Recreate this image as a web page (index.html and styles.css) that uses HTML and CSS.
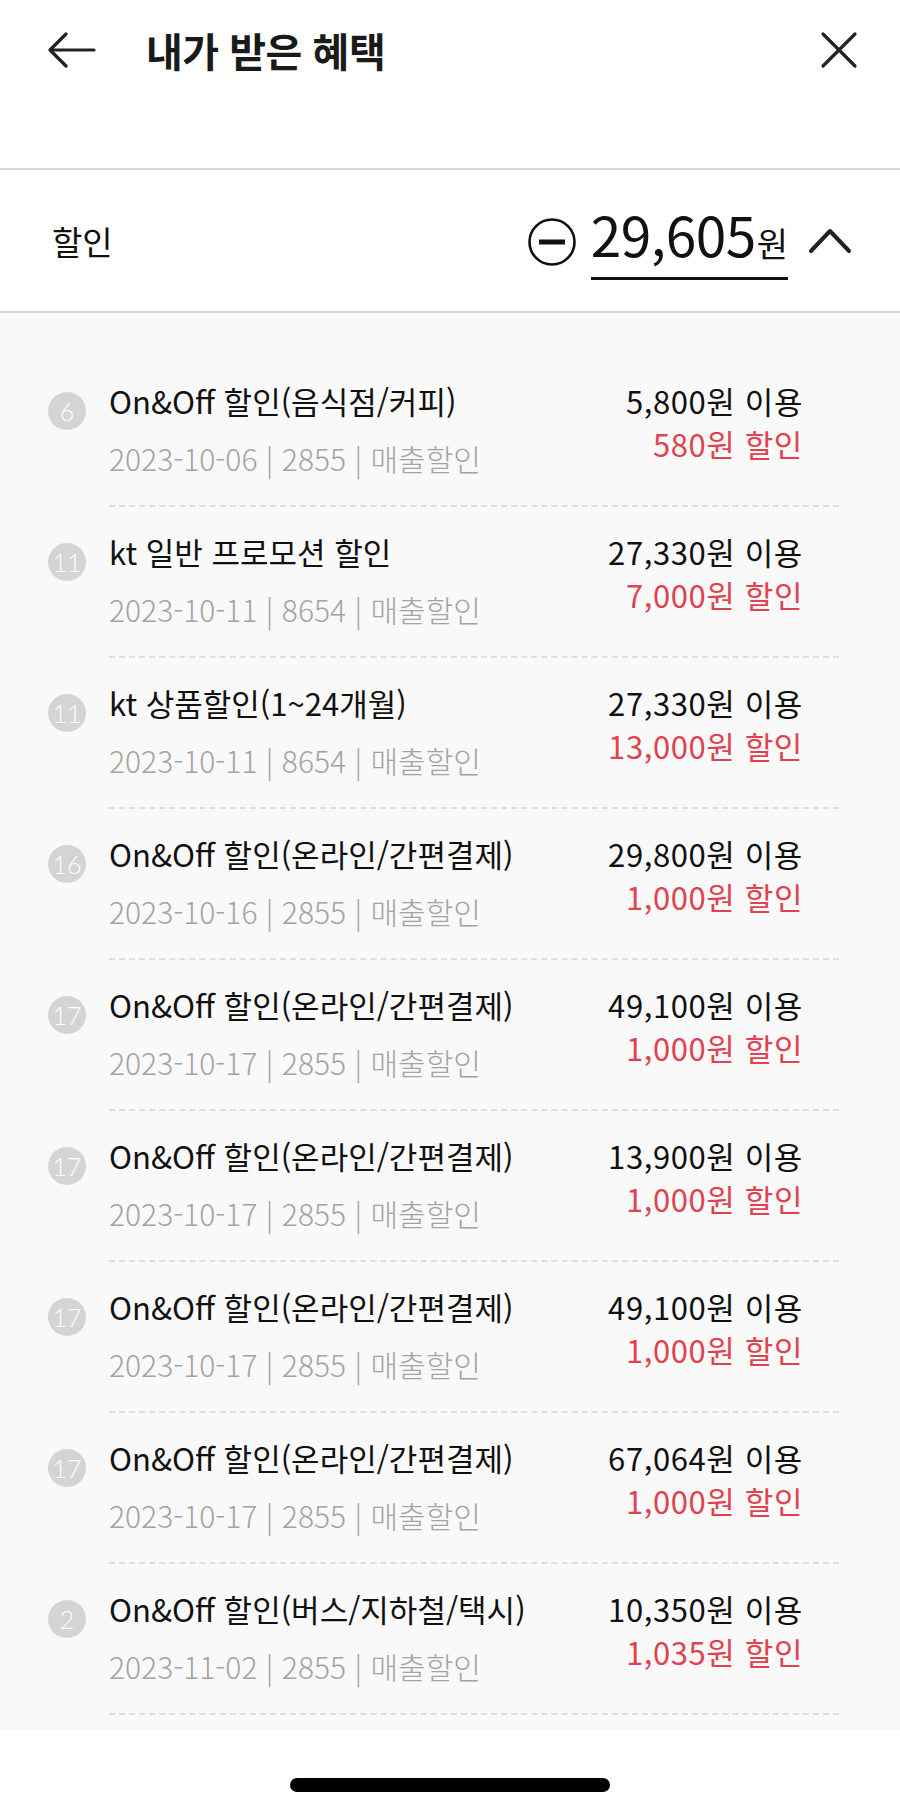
FILE: index.html
```html
<!DOCTYPE html>
<html lang="ko">
<head>
<meta charset="utf-8">
<title>내가 받은 혜택</title>
<link rel="stylesheet" href="styles.css">
</head>
<body>
<div class="page">
  <header class="topbar">
    <div class="topbar-row">
      <svg class="icon-back" viewBox="0 0 48 36" width="48" height="36" aria-hidden="true">
        <path d="M2 18 H46 M18 2 L2 18 L18 34" fill="none" stroke="#222" stroke-width="3.2" stroke-linecap="round" stroke-linejoin="round"/>
      </svg>
      <h1 class="title">내가 받은 혜택</h1>
      <svg class="icon-close" viewBox="0 0 38 38" width="38" height="38" aria-hidden="true">
        <path d="M3 3 L35 35 M35 3 L3 35" fill="none" stroke="#222" stroke-width="3.2" stroke-linecap="round"/>
      </svg>
    </div>
  </header>

  <section class="summary">
    <div class="summary-label">할인</div>
    <div class="summary-right">
      <svg class="icon-minus" viewBox="0 0 50 50" width="50" height="50" aria-hidden="true">
        <circle cx="25" cy="25" r="22.5" fill="none" stroke="#111" stroke-width="2.6"/>
        <rect x="12" y="22.5" width="26" height="5" fill="#111"/>
      </svg>
      <div class="amount"><span class="amount-num">29,605</span><span class="amount-unit">원</span></div>
      <svg class="icon-chevron" viewBox="0 0 44 28" width="44" height="28" aria-hidden="true">
        <path d="M3 25 L22 5 L41 25" fill="none" stroke="#222" stroke-width="4" stroke-linecap="round" stroke-linejoin="round"/>
      </svg>
    </div>
  </section>

  <main class="list">
    <div class="item">
      <div class="badge">6</div>
      <div class="item-body">
        <div class="item-left">
          <div class="item-title">On&amp;Off 할인(음식점/커피)</div>
          <div class="item-sub">2023-10-06 | 2855 | 매출할인</div>
        </div>
        <div class="item-right">
          <div class="item-use">5,800원 이용</div>
          <div class="item-disc">580원 할인</div>
        </div>
      </div>
    </div>
    <div class="item">
      <div class="badge">11</div>
      <div class="item-body">
        <div class="item-left">
          <div class="item-title">kt 일반 프로모션 할인</div>
          <div class="item-sub">2023-10-11 | 8654 | 매출할인</div>
        </div>
        <div class="item-right">
          <div class="item-use">27,330원 이용</div>
          <div class="item-disc">7,000원 할인</div>
        </div>
      </div>
    </div>
    <div class="item">
      <div class="badge">11</div>
      <div class="item-body">
        <div class="item-left">
          <div class="item-title">kt 상품할인(1~24개월)</div>
          <div class="item-sub">2023-10-11 | 8654 | 매출할인</div>
        </div>
        <div class="item-right">
          <div class="item-use">27,330원 이용</div>
          <div class="item-disc">13,000원 할인</div>
        </div>
      </div>
    </div>
    <div class="item">
      <div class="badge">16</div>
      <div class="item-body">
        <div class="item-left">
          <div class="item-title">On&amp;Off 할인(온라인/간편결제)</div>
          <div class="item-sub">2023-10-16 | 2855 | 매출할인</div>
        </div>
        <div class="item-right">
          <div class="item-use">29,800원 이용</div>
          <div class="item-disc">1,000원 할인</div>
        </div>
      </div>
    </div>
    <div class="item">
      <div class="badge">17</div>
      <div class="item-body">
        <div class="item-left">
          <div class="item-title">On&amp;Off 할인(온라인/간편결제)</div>
          <div class="item-sub">2023-10-17 | 2855 | 매출할인</div>
        </div>
        <div class="item-right">
          <div class="item-use">49,100원 이용</div>
          <div class="item-disc">1,000원 할인</div>
        </div>
      </div>
    </div>
    <div class="item">
      <div class="badge">17</div>
      <div class="item-body">
        <div class="item-left">
          <div class="item-title">On&amp;Off 할인(온라인/간편결제)</div>
          <div class="item-sub">2023-10-17 | 2855 | 매출할인</div>
        </div>
        <div class="item-right">
          <div class="item-use">13,900원 이용</div>
          <div class="item-disc">1,000원 할인</div>
        </div>
      </div>
    </div>
    <div class="item">
      <div class="badge">17</div>
      <div class="item-body">
        <div class="item-left">
          <div class="item-title">On&amp;Off 할인(온라인/간편결제)</div>
          <div class="item-sub">2023-10-17 | 2855 | 매출할인</div>
        </div>
        <div class="item-right">
          <div class="item-use">49,100원 이용</div>
          <div class="item-disc">1,000원 할인</div>
        </div>
      </div>
    </div>
    <div class="item">
      <div class="badge">17</div>
      <div class="item-body">
        <div class="item-left">
          <div class="item-title">On&amp;Off 할인(온라인/간편결제)</div>
          <div class="item-sub">2023-10-17 | 2855 | 매출할인</div>
        </div>
        <div class="item-right">
          <div class="item-use">67,064원 이용</div>
          <div class="item-disc">1,000원 할인</div>
        </div>
      </div>
    </div>
    <div class="item">
      <div class="badge">2</div>
      <div class="item-body">
        <div class="item-left">
          <div class="item-title">On&amp;Off 할인(버스/지하철/택시)</div>
          <div class="item-sub">2023-11-02 | 2855 | 매출할인</div>
        </div>
        <div class="item-right">
          <div class="item-use">10,350원 이용</div>
          <div class="item-disc">1,035원 할인</div>
        </div>
      </div>
    </div>
  </main>

  <footer class="home-area">
    <div class="home-indicator"></div>
  </footer>
</div>
</body>
</html>
```

FILE: styles.css
```css
* {
  box-sizing: border-box;
}

html, body {
  margin: 0;
  padding: 0;
  background: #ffffff;
}

body {
  font-family: "Noto Sans CJK KR", "Noto Sans", sans-serif;
  color: #111111;
}

.page {
  width: 900px;
  height: 1796px;
  display: flex;
  flex-direction: column;
  overflow: hidden;
}

/* Top bar */
.topbar {
  height: 170px;
  border-bottom: 2px solid #d6d6d6;
}

.topbar-row {
  height: 100px;
  display: flex;
  align-items: center;
  padding: 0 42px 0 48px;
}

.icon-back {
  flex: none;
  display: block;
}

.title {
  margin: 0 0 0 50px;
  font-size: 40px;
  font-weight: 700;
  line-height: 48px;
  letter-spacing: -0.5px;
  color: #1a1a1a;
  flex: 1;
}

.icon-close {
  flex: none;
  display: block;
}

/* Summary row */
.summary {
  height: 143px;
  border-bottom: 2px solid #d6d6d6;
  display: flex;
  align-items: center;
  justify-content: space-between;
  padding: 0 48px 0 52px;
}

.summary-label {
  font-size: 33px;
  line-height: 40px;
  color: #111;
}

.summary-right {
  display: flex;
  align-items: center;
}

.icon-minus {
  display: block;
  flex: none;
  margin-right: 14px;
  margin-top: 2px;
}

.amount {
  display: flex;
  align-items: baseline;
  border-bottom: 3px solid #111;
  padding-bottom: 7px;
  margin-top: 4px;
  line-height: 55px;
}

.amount-num {
  font-size: 55px;
  font-weight: 400;
  letter-spacing: -0.5px;
}

.amount-unit {
  font-size: 34px;
  margin-left: 1px;
}

.icon-chevron {
  display: block;
  flex: none;
  margin-left: 20px;
  margin-top: -2px;
}

/* List */
.list {
  background: #f9f9f9;
  padding: 43px 61px 0 48px;
  height: 1417px;
}

.item {
  display: flex;
  align-items: flex-start;
}

.badge {
  flex: none;
  width: 38px;
  height: 38px;
  border-radius: 50%;
  background: #d4d4d4;
  color: #ffffff;
  font-family: "Lato", "Noto Sans", sans-serif;
  font-weight: 300;
  font-size: 25px;
  line-height: 38px;
  text-align: center;
  margin-top: 36px;
  margin-right: 23px;
}

.item-body {
  flex: 1;
  display: flex;
  justify-content: space-between;
  padding: 25px 36px 27px 0;
  border-bottom: 2px dashed #dedede;
}

.item-title {
  font-size: 31px;
  line-height: 40px;
  color: #111;
  white-space: nowrap;
}

.item-sub {
  margin-top: 17px;
  font-size: 30px;
  line-height: 40px;
  font-weight: 300;
  color: #a3a3a3;
  white-space: nowrap;
}

.item-right {
  text-align: right;
}

.item-use {
  font-size: 31px;
  line-height: 40px;
  letter-spacing: 0.6px;
  color: #111;
  white-space: nowrap;
}

.item-disc {
  margin-top: 3px;
  font-size: 31px;
  line-height: 40px;
  letter-spacing: 0.6px;
  color: #e0434f;
  white-space: nowrap;
}

/* Home indicator */
.home-area {
  flex: 1;
  display: flex;
  align-items: flex-end;
  justify-content: center;
  padding-bottom: 4px;
}

.home-indicator {
  width: 320px;
  height: 14px;
  border-radius: 7px;
  background: #000;
}
```
